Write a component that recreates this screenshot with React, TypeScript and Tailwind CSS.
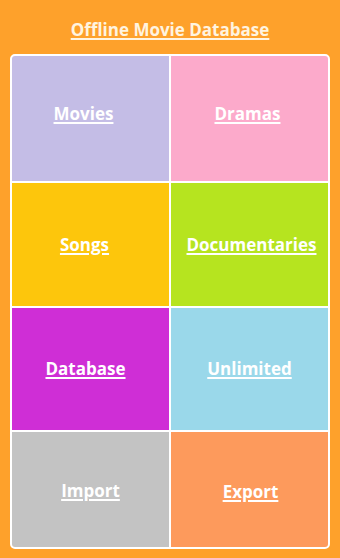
const tiles = [
  { label: 'Movies', bg: 'bg-[#c4bde6]', pad: 'pb-[10px] pr-[14px]' },
  { label: 'Dramas', bg: 'bg-[#fcaacb]', pad: 'pb-[10px] pr-[4px]' },
  { label: 'Songs', bg: 'bg-[#fdc60c]', pad: 'pr-[12px]' },
  { label: 'Documentaries', bg: 'bg-[#b6e41f]', pad: 'pl-[4px]' },
  { label: 'Database', bg: 'bg-[#cf2ed6]', pad: 'pr-[10px]' },
  { label: 'Unlimited', bg: 'bg-[#9ad8ea]', pad: '' },
  { label: 'Import', bg: 'bg-[#c3c3c3]', pad: 'pt-[2px]' },
  { label: 'Export', bg: 'bg-[#fd9a5c]', pad: 'pt-[4px] pl-[2px]' },
];

export default function App() {
  return (
    <div
      className="w-[340px] h-[558px] bg-[#fea12b] flex flex-col"
      style={{ fontFamily: '"Open Sans", "Liberation Sans", sans-serif' }}
    >
      {/* Title */}
      <div className="h-[54px] flex items-center justify-center pt-[6px]">
        <h1 className="text-[17px] font-bold text-[#fff4e0] underline underline-offset-2 decoration-2">
          Offline Movie Database
        </h1>
      </div>

      {/* Menu grid */}
      <div className="mx-[10px] border-2 border-white rounded-[5px] bg-white overflow-hidden">
        <div className="grid grid-cols-2 grid-rows-[125px_123px_122px_115px] gap-[2px]">
          {tiles.map((t) => (
            <a
              key={t.label}
              href="#"
              className={`${t.bg} ${t.pad} flex items-center justify-center`}
            >
              <span className="text-[17px] font-bold text-white underline underline-offset-2 decoration-2">
                {t.label}
              </span>
            </a>
          ))}
        </div>
      </div>
    </div>
  );
}
